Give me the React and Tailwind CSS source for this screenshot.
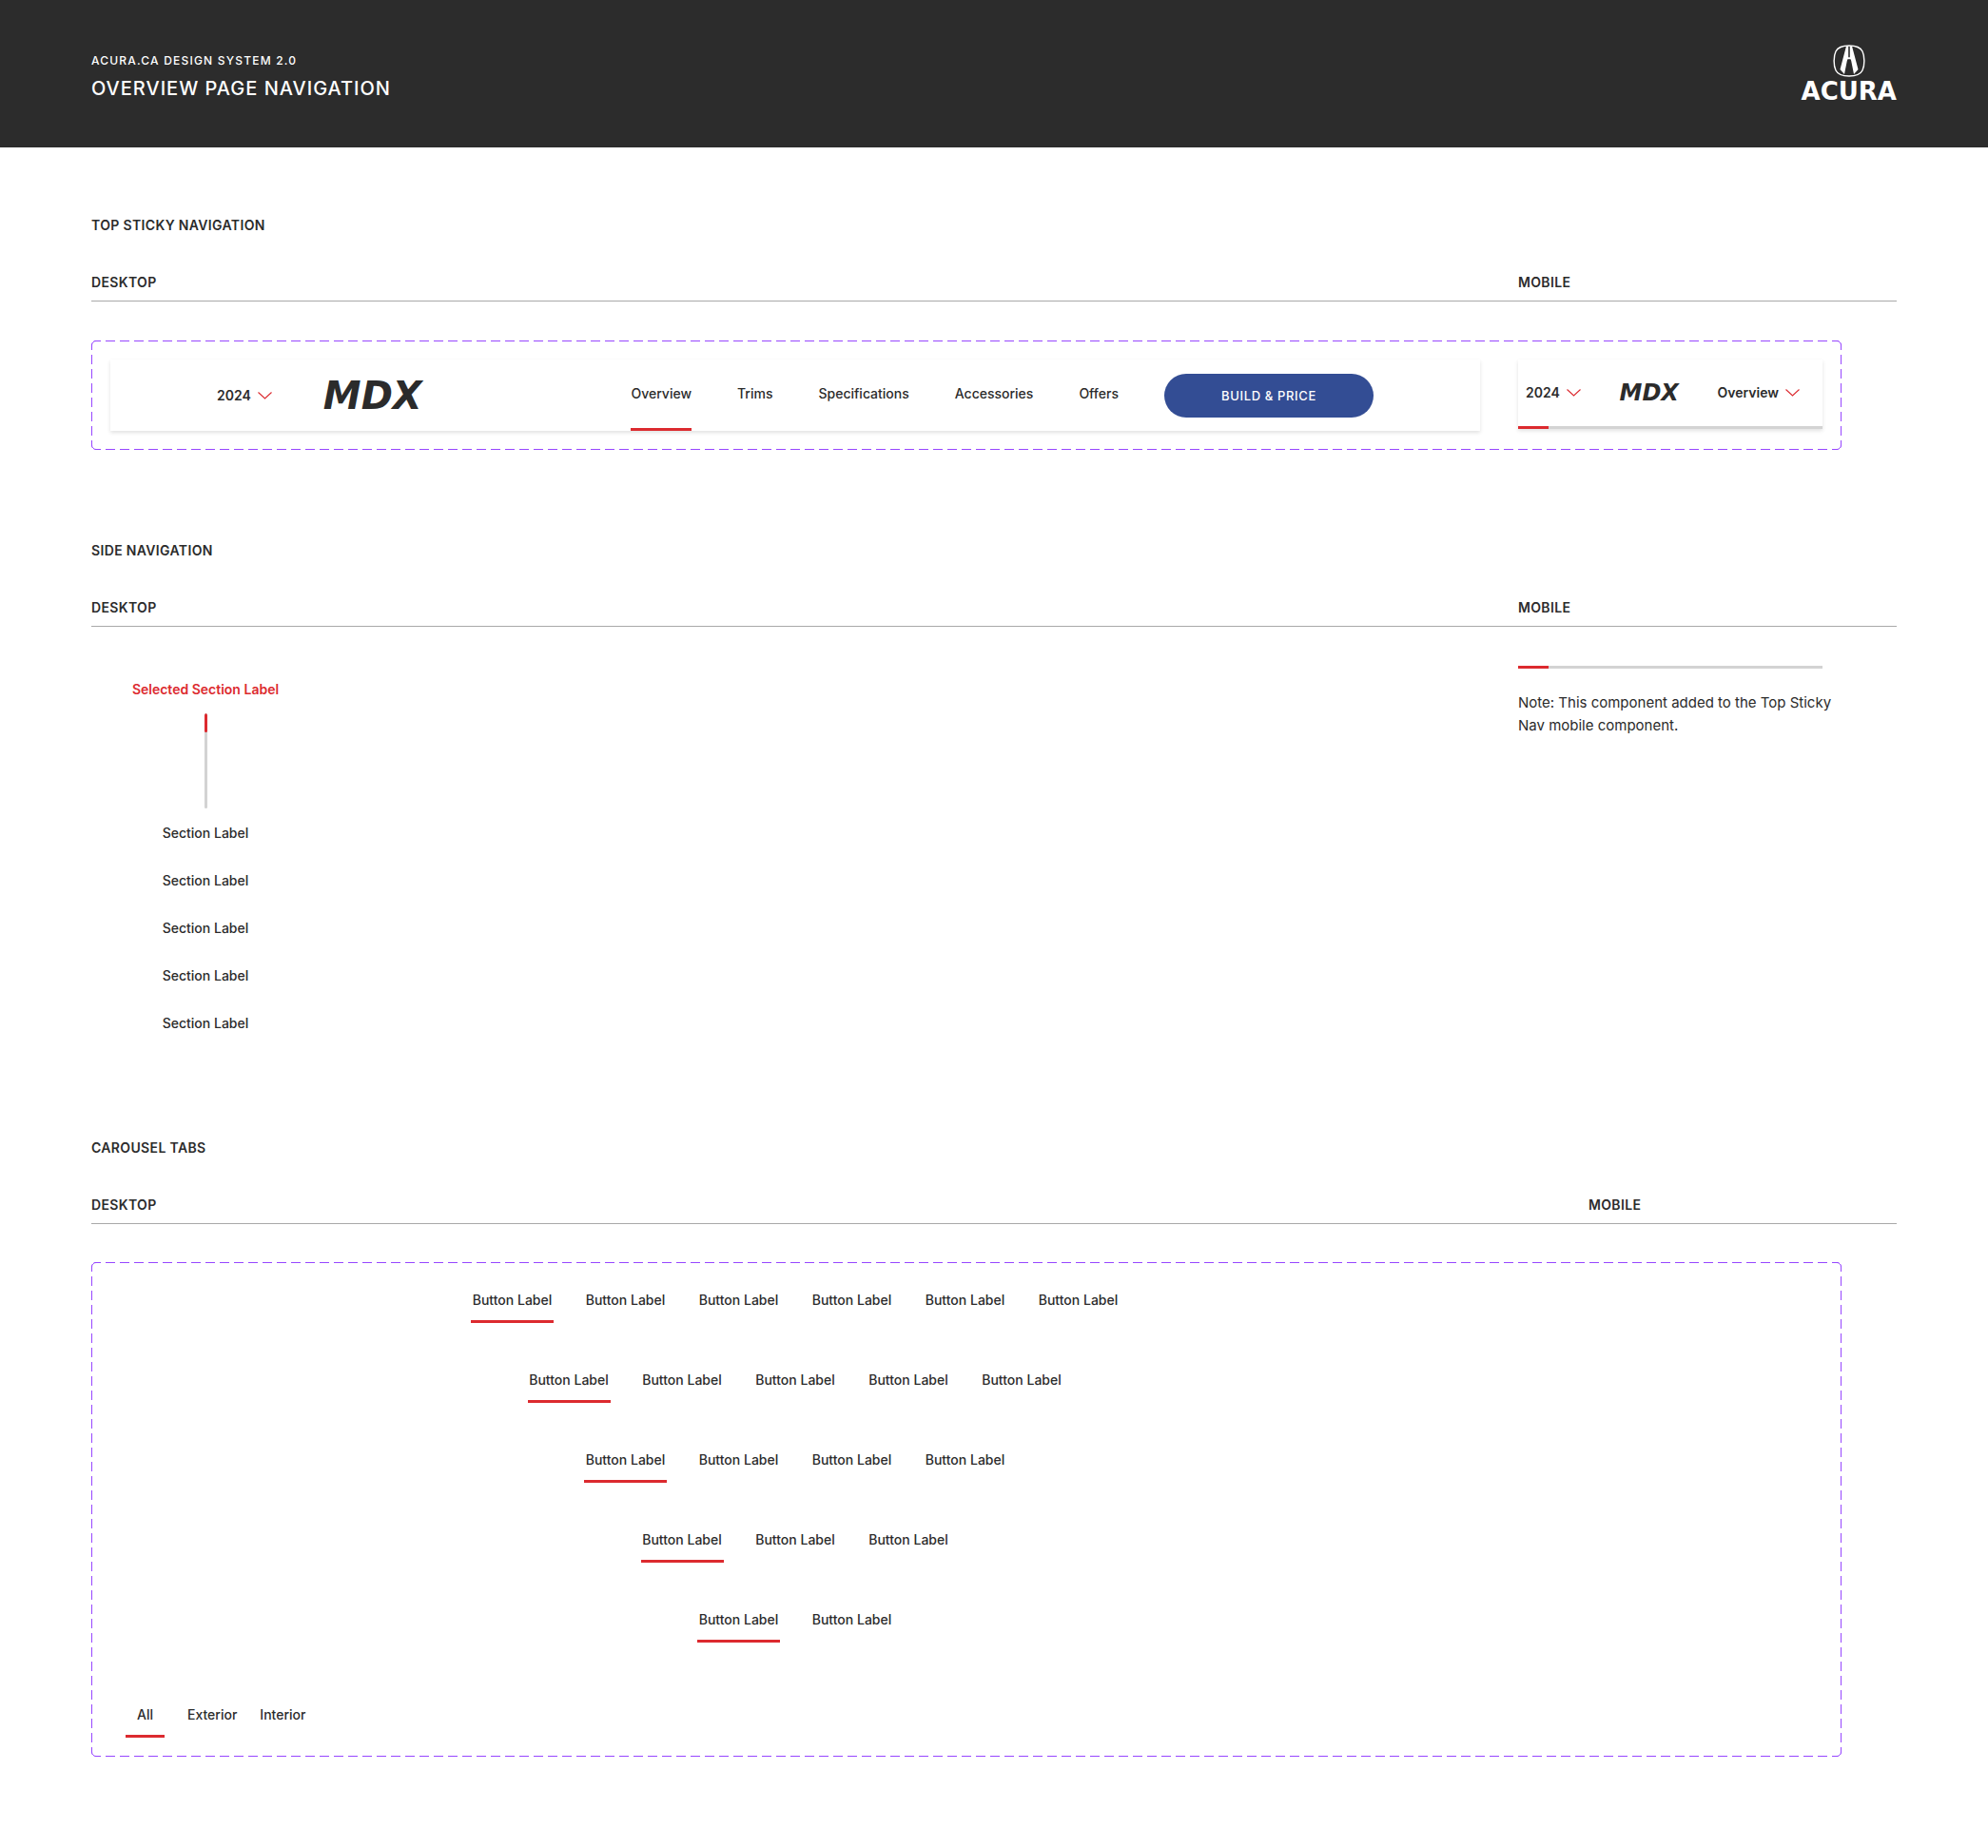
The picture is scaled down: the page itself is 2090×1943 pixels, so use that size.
import React, { useState } from 'react';

const YEARS = ['2024'];
const NAV_LINKS = ['Overview', 'Trims', 'Specifications', 'Accessories', 'Offers'];
const TAB_COUNTS = [6, 5, 4, 3, 2];

function AcuraLogo() {
  return (
    <a href="#home" aria-label="Acura" className="flex flex-col items-center gap-[3px] text-white">
      <svg width="34" height="34" viewBox="0 0 34 34" fill="none">
        <path
          d="M17 1C25 1 29 3 31 7C33.500 12 33.500 22 31 27C29 31 25 33 17 33C9 33 5 31 3 27C.5 22 .5 12 3 7C5 3 9 1 17 1Z"
          stroke="currentColor"
          strokeWidth="1.400"
        />
        <path d="M14 1.500H16.200V13L14.800 17L12 31L7.500 26Z" fill="currentColor" />
        <path d="M20 1.500H17.800V13L19.200 17L22 31L26.500 26Z" fill="currentColor" />
        <path d="M15 13.200H19V15.200H15Z" fill="currentColor" />
      </svg>
      <span className="font-['DejaVu_Sans',sans-serif] text-[26px] leading-6 font-bold">ACURA</span>
    </a>
  );
}

function Chevron() {
  return (
    <svg width="15" height="8" viewBox="0 0 15 8" fill="none" className="text-[#dc2a2f]">
      <path d="M.5 .5L7.500 7L14.500 .5" stroke="currentColor" strokeWidth="1.100" />
    </svg>
  );
}

// Dashes start at every corner, so each side is stroked on its own
function DashedFrame({ className, children }) {
  return (
    <div className={`relative ${className}`}>
      <svg
        className="absolute inset-0 w-full h-full rounded-[5px] overflow-hidden pointer-events-none"
        fill="none"
        stroke="#9747ff"
        aria-hidden="true"
      >
        <g strokeDasharray="10 5">
          <line x1="0" y1=".5" x2="100%" y2=".5" />
          <line x1=".5" y1="0" x2=".5" y2="100%" />
          <svg y="100%" overflow="visible">
            <line x1="0" y1="-.5" x2="100%" y2="-.5" />
          </svg>
          <svg x="100%" overflow="visible">
            <line x1="-.5" y1="0" x2="-.5" y2="100%" />
          </svg>
        </g>
        <path d="M.5 5A4.500 4.500 0 0 1 5 .5" />
        <svg x="100%" overflow="visible">
          <path d="M-5 .5A4.500 4.500 0 0 1 -.5 5" />
        </svg>
        <svg y="100%" overflow="visible">
          <path d="M.5 -5A4.500 4.500 0 0 0 5 -.5" />
        </svg>
        <svg x="100%" y="100%" overflow="visible">
          <path d="M-5 -.5A4.500 4.500 0 0 0 -.5 -5" />
        </svg>
      </svg>
      {children}
    </div>
  );
}

function SectionHeader({ title, mobileClass = 'w-[398px]' }) {
  return (
    <header className="text-[14px] leading-5 font-semibold uppercase tracking-wide">
      <h2>{title}</h2>
      <div className="mt-10 pb-[9px] flex border-b border-[#a9a9a9]">
        <h3 className="flex-1">Desktop</h3>
        <h3 className={mobileClass}>Mobile</h3>
      </div>
    </header>
  );
}

function ProgressBar() {
  return (
    <div className="h-[3px] bg-[#d3d3d3]">
      <div className="h-full w-1/10 bg-[#dc2a2f]" />
    </div>
  );
}

function DesktopNav() {
  const [active, setActive] = useState('Overview');

  return (
    <nav className="flex-1 h-[75px] px-28 flex items-center justify-between bg-white shadow-[0_2px_4px_rgba(0,0,0,0.12)]">
      <div className="flex items-center">
        <button className="flex items-center gap-[7px] font-semibold">
          {YEARS[0]}
          <Chevron />
        </button>
        <span className="ml-4 w-[180px] text-center font-['DejaVu_Sans',sans-serif] text-[40px] leading-10 font-bold italic">
          MDX
        </span>
      </div>

      <div className="h-full flex items-center gap-12">
        {NAV_LINKS.map((link) => (
          <a
            key={link}
            href={`#${link.toLowerCase()}`}
            onClick={() => setActive(link)}
            className={`h-full pt-6 border-b-3 ${
              active === link ? 'border-[#dc2a2f]' : 'border-transparent'
            }`}
          >
            {link}
          </a>
        ))}
        <button className="w-[220px] h-[46px] rounded-full bg-[#334d94] text-white text-[13px] uppercase tracking-wider">
          Build &amp; Price
        </button>
      </div>
    </nav>
  );
}

function MobileNav() {
  return (
    <nav className="w-80 h-[73px] flex flex-col bg-white shadow-[0_2px_4px_rgba(0,0,0,0.12)]">
      <div className="flex-1 pl-2 pr-6 flex items-center justify-between font-semibold">
        <button className="flex items-center gap-[7px]">
          {YEARS[0]}
          <Chevron />
        </button>
        <span className="font-['DejaVu_Sans',sans-serif] text-[24px] leading-6 font-bold italic">MDX</span>
        <button className="flex items-center gap-[7px]">
          Overview
          <Chevron />
        </button>
      </div>
      <ProgressBar />
    </nav>
  );
}

function SideNav() {
  return (
    <nav className="w-60 pt-14 flex flex-col items-center leading-5">
      <a href="#selected" className="font-semibold text-[#dc2a2f]">Selected Section Label</a>
      <div className="mt-[15px] mb-4 w-[3px] h-[100px] rounded-full overflow-hidden bg-[#d3d3d3]">
        <div className="h-1/5 rounded-full bg-[#dc2a2f]" />
      </div>
      <ul className="space-y-[30px]">
        {[1, 2, 3, 4, 5].map((n) => (
          <li key={n}>
            <a href={`#section-${n}`}>Section Label</a>
          </li>
        ))}
      </ul>
    </nav>
  );
}

function TabRow({ count }) {
  const [active, setActive] = useState(0);

  return (
    <div className="flex justify-center gap-8">
      {Array.from({ length: count }, (_, i) => (
        <button
          key={i}
          onClick={() => setActive(i)}
          className={`w-[87px] pb-[9px] border-b-3 ${active === i ? 'border-[#dc2a2f]' : 'border-transparent'}`}
        >
          Button Label
        </button>
      ))}
    </div>
  );
}

export default function App() {
  return (
    <div className="min-h-screen bg-white text-[#2b2b2b] font-['Inter',sans-serif] text-[14px] leading-6 font-medium">
      <header className="h-[155px] px-24 pt-[47px] flex items-start justify-between bg-[#2c2c2c] text-white">
        <div className="pt-[7px] uppercase">
          <p className="text-[12px] leading-5 tracking-widest">Acura.ca Design System 2.0</p>
          <h1 className="mt-1 text-[20px] leading-[30px] tracking-wider">Overview Page Navigation</h1>
        </div>
        <AcuraLogo />
      </header>

      <main className="px-24 pt-[72px] pb-24">
        {/* Top sticky navigation */}
        <section>
          <SectionHeader title="Top Sticky Navigation" />
          <DashedFrame className="mt-[41px] mr-[58px] p-5 flex items-start gap-10">
            <DesktopNav />
            <MobileNav />
          </DashedFrame>
        </section>

        {/* Side navigation */}
        <section className="mt-24">
          <SectionHeader title="Side Navigation" />
          <div className="flex justify-between">
            <SideNav />
            <div className="w-[398px] pt-[41px]">
              <div className="w-80">
                <ProgressBar />
              </div>
              <p className="mt-6 w-[340px] font-normal text-[15px]">
                Note: This component added to the Top Sticky Nav mobile component.
              </p>
            </div>
          </div>
        </section>

        {/* Carousel tabs */}
        <section className="mt-[111px]">
          <SectionHeader title="Carousel Tabs" mobileClass="w-[324px]" />
          <DashedFrame className="mt-10 mr-[58px] pt-7 pb-5 px-5">
            <div className="mr-90 flex flex-col gap-12">
              {TAB_COUNTS.map((count) => (
                <TabRow key={count} count={count} />
              ))}
            </div>
            <div className="mt-16 ml-4 flex gap-6">
              <button className="px-3 pb-[9px] border-b-3 border-[#dc2a2f]">All</button>
              <button className="pb-[9px] border-b-3 border-transparent">Exterior</button>
              <button className="pb-[9px] border-b-3 border-transparent">Interior</button>
            </div>
          </DashedFrame>
        </section>
      </main>
    </div>
  );
}
